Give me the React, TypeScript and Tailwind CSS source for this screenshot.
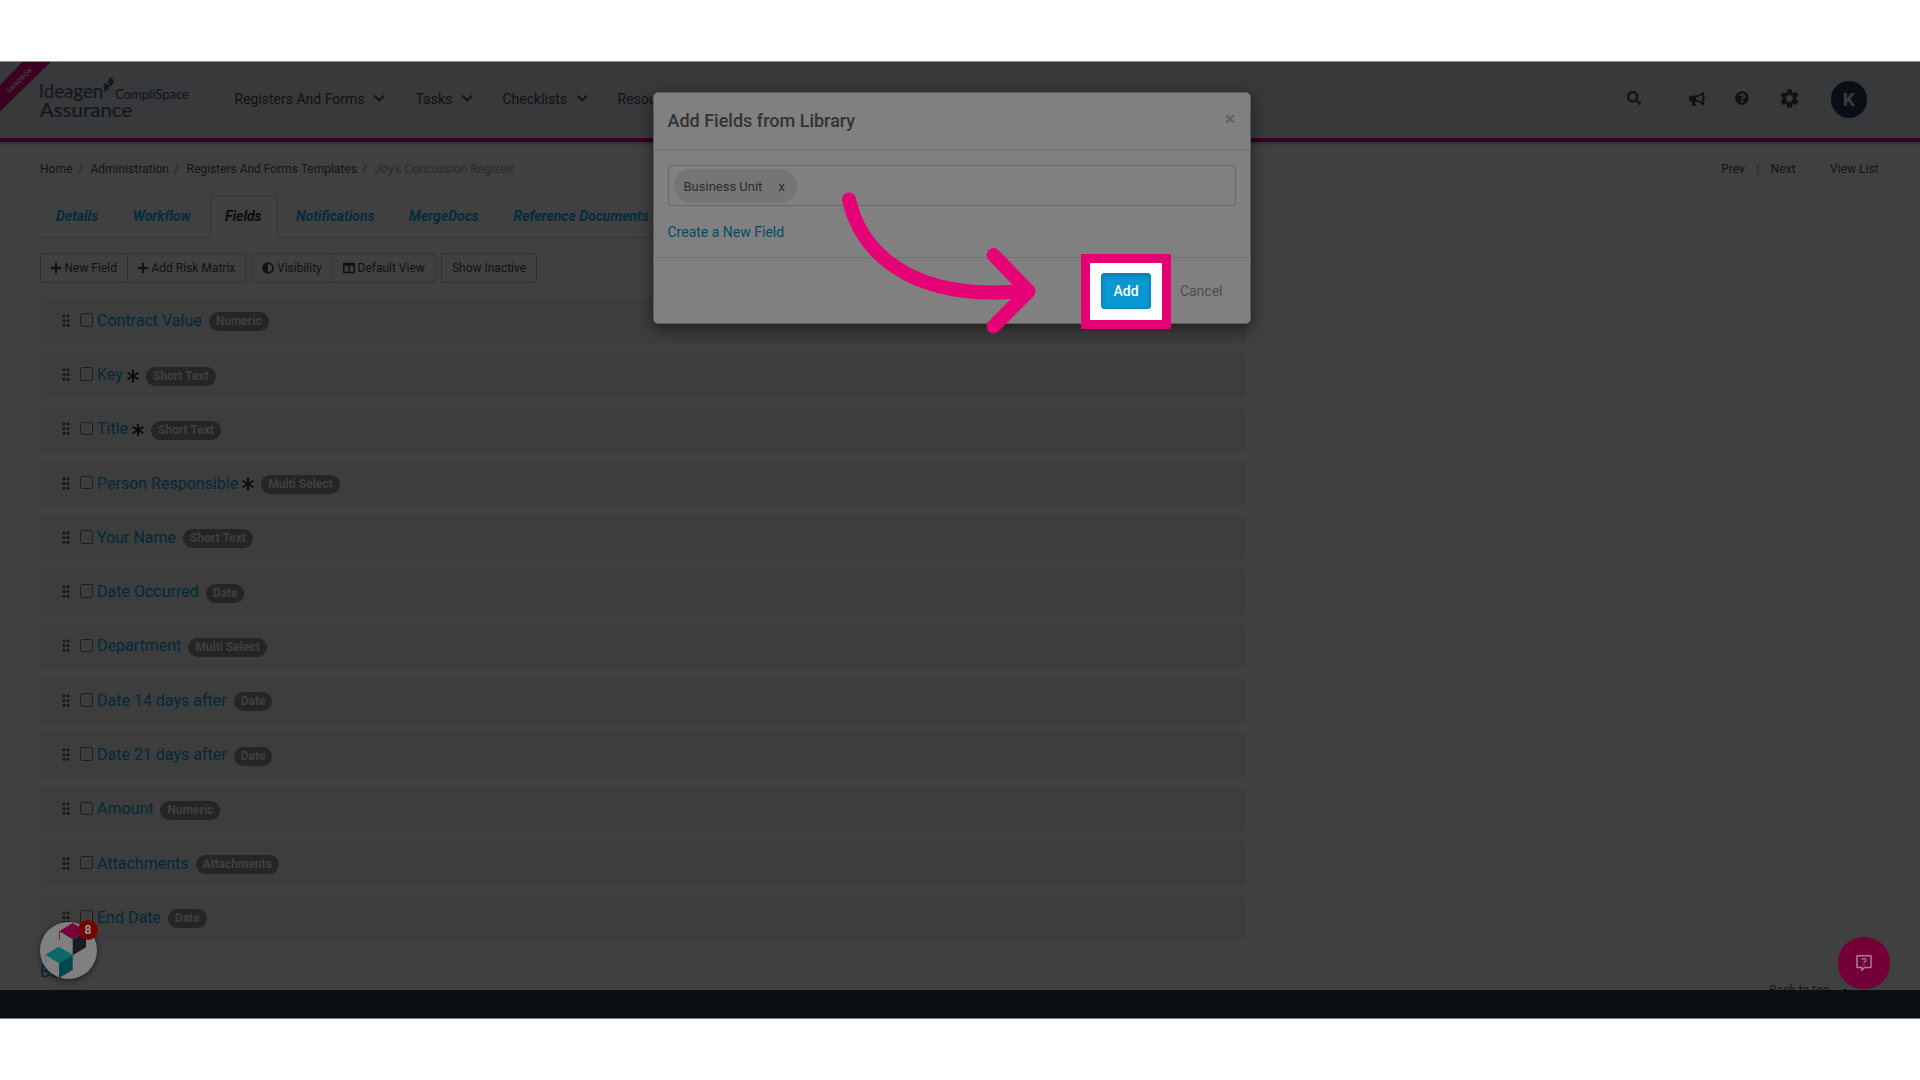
import React from "react";
import { FaSearch, FaBullhorn, FaQuestionCircle, FaChevronDown, FaPlus, FaAdjust, FaColumns, FaCaretUp } from "react-icons/fa";
import { MdSettings } from "react-icons/md";

type Field = { name: string; type: string; required?: boolean };

const FIELDS: Field[] = [
  { name: "Contract Value", type: "Numeric" },
  { name: "Key", type: "Short Text", required: true },
  { name: "Title", type: "Short Text", required: true },
  { name: "Person Responsible", type: "Multi Select", required: true },
  { name: "Your Name", type: "Short Text" },
  { name: "Date Occurred", type: "Date" },
  { name: "Department", type: "Multi Select" },
  { name: "Date 14 days after", type: "Date" },
  { name: "Date 21 days after", type: "Date" },
  { name: "Amount", type: "Numeric" },
  { name: "Attachments", type: "Attachments" },
  { name: "End Date", type: "Date" },
];

function Ribbon() {
  return (
    <svg className="absolute left-0 top-0" width="52" height="52" viewBox="0 62 52 52">
      <path d="M22.500 62H50.500L0 111.500V85Z" fill="#3a001f" />
      <text x="19.500" y="82.500" textAnchor="middle" transform="rotate(-45 19.500 80.500)" fontFamily="Lato, sans-serif" fontWeight="700" fontSize="6" textLength="32" fill="#50454d">
        SANDBOX
      </text>
    </svg>
  );
}

function Logo() {
  return (
    <svg className="mt-[14px] shrink-0" width="155" height="46" viewBox="38 76 155 46" fill="#14181d" fontFamily="Lato, sans-serif">
      <g stroke="#14181d" strokeWidth="0.200">
        <text x="38.800" y="98" fontSize="19" textLength="64.500" lengthAdjust="spacingAndGlyphs">Ideagen</text>
        <text x="115" y="99" fontSize="13" textLength="74" lengthAdjust="spacingAndGlyphs">CompliSpace</text>
        <text x="39.800" y="117" fontSize="18.500" textLength="92.500" lengthAdjust="spacingAndGlyphs">Assurance</text>
      </g>
      <path d="M104.200 83.600C106.800 83 109.100 84.800 109 87.200C108.900 89.800 106.500 91.400 103.300 91.600C105 89.800 105 88.400 103 87.400C104.400 86.400 104.800 85.100 104.200 83.600Z" />
      <path d="M108.600 77.900C111.400 77.200 113.800 79.100 113.700 81.600C113.600 84.400 111.300 86.200 107.800 86.400C109.700 84.500 109.600 83 107.400 81.900C108.900 80.900 109.300 79.500 108.600 77.900Z" />
    </svg>
  );
}

function NavItem({ label, w }: { label: string; w: string }) {
  return (
    <div className={"flex items-center gap-[8.500px] " + w}>
      {label}
      <FaChevronDown size={12.5} />
    </div>
  );
}

function Header() {
  return (
    <header className="relative flex h-[79.500px] shrink-0 border-b-[4px] border-[#390020] bg-[#38393a] pl-[38px] pr-[53px] text-sm leading-5 text-[#101214] shadow-[0_1px_3px_rgba(0,0,0,0.4)]">
      <Ribbon />
      <Logo />
      <nav className="ml-[41.500px] mt-[26.500px] flex h-5">
        <NavItem label="Registers And Forms" w="w-[181px]" />
        <NavItem label="Tasks" w="w-[87px]" />
        <NavItem label="Checklists" w="w-[115px]" />
        <span>Resources</span>
      </nav>
      <div className="ml-auto mt-[19px] flex h-[37px] items-center">
        <FaSearch size={14} className="-mt-[3px] mr-[47.500px]" />
        <FaBullhorn size={16} className="-mt-[2px] mr-[30px]" />
        <FaQuestionCircle size={14} className="-mt-[3px] mr-[29px]" />
        <MdSettings size={23} className="-mt-[3px] mr-[30px]" />
        <div className="flex size-[36.500px] items-center justify-center rounded-full bg-[#0b0f15] pt-px text-[19px] font-bold text-[#3b3c3e]">K</div>
      </div>
    </header>
  );
}

function Breadcrumbs() {
  return (
    <div className="flex h-4 items-center text-xs text-[#141414]">
      <span className="w-[38px]">Home</span>
      <span className="w-[12.500px] text-[#282828]">/</span>
      <span className="w-[83.500px]">Administration</span>
      <span className="w-[12.500px] text-[#282828]">/</span>
      <span className="w-[175.500px]">Registers And Forms Templates</span>
      <span className="w-[12.500px] text-[#282828]">/</span>
      <span className="text-[#2a2a2a]">Joy's Concussion Register</span>
      <span className="ml-auto">Prev</span>
      <span className="mx-[11.500px] text-[#282828]">|</span>
      <span>Next</span>
      <span className="-mr-[0.500px] ml-[34.500px]">View List</span>
    </div>
  );
}

function Tabs() {
  return (
    <div className="mt-[18.500px] flex h-[42.500px] w-[1205px] border-b border-[#373737] text-sm font-bold italic leading-[42px] text-[#022c3d]">
      <span className="w-[77px] pl-4">Details</span>
      <span className="w-[92.500px] pl-4">Workflow</span>
      <span className="h-[43px] w-[68px] rounded-t border border-b-0 border-[#373737] bg-[#404040] pl-[14.500px] leading-[41px] text-[#0c0c0c]">Fields</span>
      <span className="w-[113px] pl-[18.500px]">Notifications</span>
      <span className="w-[104px] pl-[18.500px]">MergeDocs</span>
      <span className="pl-[19px]">Reference Documents</span>
    </div>
  );
}

function Toolbar() {
  const group = "flex h-[29.500px] rounded-[3px] border border-[#333]";
  return (
    <div className="mt-[15.500px] flex text-xs text-[#111]">
      <div className={group + " w-[205.500px]"}>
        <div className="flex w-[87px] items-center gap-[3px] border-r border-[#333] pl-[8.500px]">
          <FaPlus size={12} /> New Field
        </div>
        <div className="flex items-center gap-[3px] pl-[8.500px]">
          <FaPlus size={12} /> Add Risk Matrix
        </div>
      </div>
      <div className={group + " ml-[5.500px] w-[184.500px]"}>
        <div className="flex w-[81px] items-center gap-[3px] border-r border-[#333] pl-[10px]">
          <FaAdjust size={12} /> Visibility
        </div>
        <div className="flex items-center gap-[3px] pl-[9.500px]">
          <FaColumns size={12} /> Default View
        </div>
      </div>
      <div className={group + " ml-[5.500px] w-[96px] items-center justify-center"}>Show Inactive</div>
    </div>
  );
}

function Grip() {
  return (
    <svg width="8" height="14" viewBox="0 0 8 14" fill="#151515">
      {[2, 6.7, 11.4].map((y) => (
        <g key={y}>
          <circle cx="1.900" cy={y} r="1.450" />
          <circle cx="6" cy={y} r="1.450" />
        </g>
      ))}
    </svg>
  );
}

function FieldRow({ field }: { field: Field }) {
  return (
    <div className="flex h-[45.600px] shrink-0 items-center rounded bg-[#3d3d3d] pl-[22px]">
      <Grip />
      <span className="-mt-[2px] ml-[10px] h-[13.500px] w-[13px] rounded-[2.500px] border border-[#1d1d1d]" />
      <span className="ml-[4px] text-base leading-5 text-[#02293a]">{field.name}</span>
      {field.required && (
        <svg className="ml-[4px] mt-[1px]" width="12" height="14" viewBox="-6 -7 12 14" stroke="#0b0b0b" strokeWidth="1.900">
          <path d="M0-6.300V6.300M-5.400-3.200L5.400 3.200M5.400-3.200L-5.400 3.200" />
        </svg>
      )}
      <span className="ml-[7px] mt-[2px] h-[19px] rounded-full bg-[#252525] px-[7px] text-xs font-bold leading-[18px] text-[#404040]">{field.type}</span>
    </div>
  );
}

function CubeWidget() {
  return (
    <div className="absolute left-10 top-[922px] size-[56.500px] rounded-full bg-[#808080] shadow-[0_2px_6px_rgba(0,0,0,0.5)]">
      <svg width="57" height="57" viewBox="60 21 171 171">
        <path d="M118 49L158 24L198 49L158 73Z" fill="#76003c" />
        <path d="M118 48V75" stroke="#76003c" strokeWidth="2.500" />
        <path d="M158 73L198 50V97L158 121Z" fill="#181c25" />
        <path d="M76 119L116 95L158 119L117 145Z" fill="#0b686b" />
        <path d="M77 119V145" stroke="#3b7678" strokeWidth="2" />
        <path d="M117 145L158 119V165L117 189Z" fill="#00484c" />
      </svg>
      <span className="absolute -right-[1.500px] -top-[2px] flex size-5 items-center justify-center rounded-full bg-[#760000] text-xs font-bold text-[#999]">8</span>
    </div>
  );
}

function HelpWidget() {
  return (
    <div className="absolute left-[1838px] top-[937px] flex size-[52px] items-center justify-center rounded-[25px] bg-[#720037]">
      <svg width="18" height="18" viewBox="0 0 18 18" fill="none" stroke="#a38095" strokeWidth="1.500">
        <path d="M2 1.800H16V13.500H9.500L6.800 16.200V13.500H2Z" strokeLinejoin="round" />
        <path d="M6.900 5.900C7 4.200 11 4.100 11 6.200C11 7.500 9 7.500 9 9" strokeWidth="1.300" />
        <path d="M9 10.200V11.500" strokeWidth="1.400" />
      </svg>
    </div>
  );
}

function Modal() {
  return (
    <div className="absolute left-[653px] top-[92px] flex h-[232px] w-[598px] flex-col rounded-[5px] border border-[#5c5c5c] bg-[#808080] shadow-[0_5px_15px_rgba(0,0,0,0.5)]">
      <div className="flex h-[57px] justify-between border-b border-[#737373] pl-[13.500px] pr-[15px]">
        <h2 className="mt-[15.500px] text-lg font-medium leading-6 text-[#333]">Add Fields from Library</h2>
        <span className="mt-[14px] text-[19px] font-bold leading-6 text-[#626262]">×</span>
      </div>
      <div className="h-[108px] border-b border-[#737373] pl-[13.500px] pr-[14.500px] pt-[15px]">
        <div className="flex h-[41px] items-center rounded-[3px] border border-[#666] pl-[5px]">
          <span className="flex h-[34px] items-center rounded-full bg-[#757575] pl-[10px] pr-[12px] pt-[2px] text-[13px] text-[#2b2b2b]">
            Business Unit<span className="ml-[16px]">x</span>
          </span>
        </div>
        <div className="mt-[15.500px] text-sm leading-5 text-[#004b66]">Create a New Field</div>
      </div>
      <div className="flex grow justify-end pr-[27.500px] pt-[23px] text-sm leading-5 text-[#4d4d4d]">Cancel</div>
    </div>
  );
}

function Callout() {
  return (
    <>
      <svg className="absolute left-[830px] top-[180px]" width="220" height="160" viewBox="830 180 220 160" fill="none" stroke="#e60075" strokeWidth="14" strokeLinecap="round" strokeLinejoin="round">
        <path d="M849 199.500C860 248 906 303 1026 290.800" />
        <path d="M993.500 255L1028.500 291.200L993.500 326.500" />
      </svg>
      <div className="absolute left-[1081px] top-[254px] flex h-[75px] w-[90px] items-start justify-center border-[9px] border-[#e60075] bg-white pt-[10px]">
        <button className="h-[36px] w-[50px] rounded-[3px] border border-[#0784b9] bg-[#0998d2] text-sm font-medium text-white shadow-[inset_0_2px_4px_rgba(0,0,0,0.2)]">Add</button>
      </div>
    </>
  );
}

export default function App() {
  return (
    <div className="relative flex h-[1080px] w-[1920px] flex-col overflow-hidden bg-white pt-[61px] font-['Roboto',sans-serif]">
      <div className="flex h-[929px] shrink-0 flex-col overflow-hidden border-t border-[#8c8d8e] bg-[#404040]">
        <Header />
        <main className="flex flex-col pl-10 pr-[42px] pt-[19px]">
          <Breadcrumbs />
          <Tabs />
          <Toolbar />
          <div className="mt-[15.500px] flex w-[1205.500px] flex-col gap-[8.700px]">
            {FIELDS.map((f) => (
              <FieldRow key={f.name} field={f} />
            ))}
          </div>
          <div className="mt-[21px] h-5 text-base leading-5 text-[#02293a]">Back</div>
          <div className="flex h-4 items-center justify-end gap-[9px] pr-[27.500px] text-xs leading-4 text-[#141414]">
            Back to top <FaCaretUp size={12} />
          </div>
        </main>
      </div>
      <footer className="h-[29px] shrink-0 border-b border-[#75787b] bg-[#0b0f14]" />
      <CubeWidget />
      <HelpWidget />
      <Modal />
      <Callout />
    </div>
  );
}
